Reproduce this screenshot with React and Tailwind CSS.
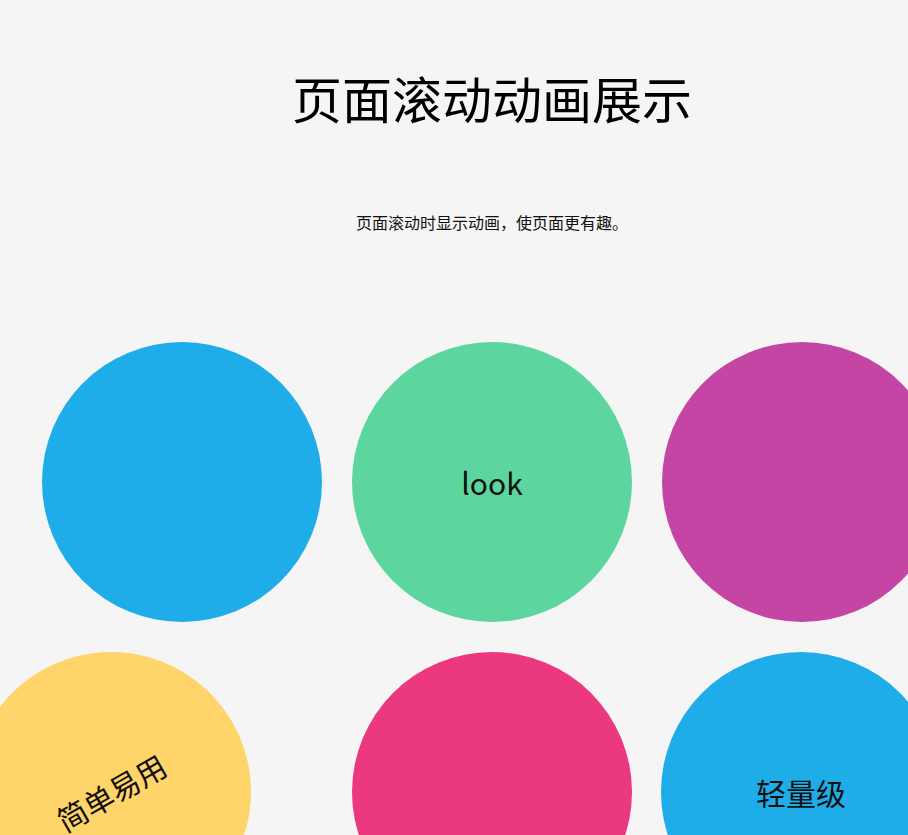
export default function App() {
  const circles = [
    { color: "bg-[#1fade9]", text: "" },
    { color: "bg-[#5cd59e]", text: "look" },
    { color: "bg-[#c545a4]", text: "" },
    { color: "bg-[#fed46b]", text: "简单易用", extra: "-translate-x-[71px] -rotate-30 text-[#3c3c3c]" },
    { color: "bg-[#ec387e]", text: "" },
    { color: "bg-[#1fade9]", text: "轻量级", extra: "-translate-x-px" },
  ];

  return (
    <div
      className="min-h-screen w-full overflow-hidden bg-[#f5f5f5] text-black"
      style={{ fontFamily: '"Noto Sans CJK SC", "Noto Sans", sans-serif' }}
    >
      <div className="w-[984px] text-center">
        {/* title */}
        <h1 className="pt-[68px] text-[50px] leading-[58px] font-normal">页面滚动动画展示</h1>

        {/* sub title */}
        <p className="mt-[84px] text-[16px] leading-[24px] text-[#111]">
          页面滚动时显示动画，使页面更有趣。
        </p>

        {/* circles */}
        <div className="mx-auto mt-[93px] grid w-[930px] grid-cols-3">
          {circles.map((c, i) => (
            <div key={i} className="m-[15px]">
              <div
                className={`flex h-[280px] w-[280px] items-center justify-center rounded-full text-[30px] text-[#111] ${c.color} ${c.extra || ""}`}
              >
                {c.text}
              </div>
            </div>
          ))}
        </div>
      </div>
    </div>
  );
}
